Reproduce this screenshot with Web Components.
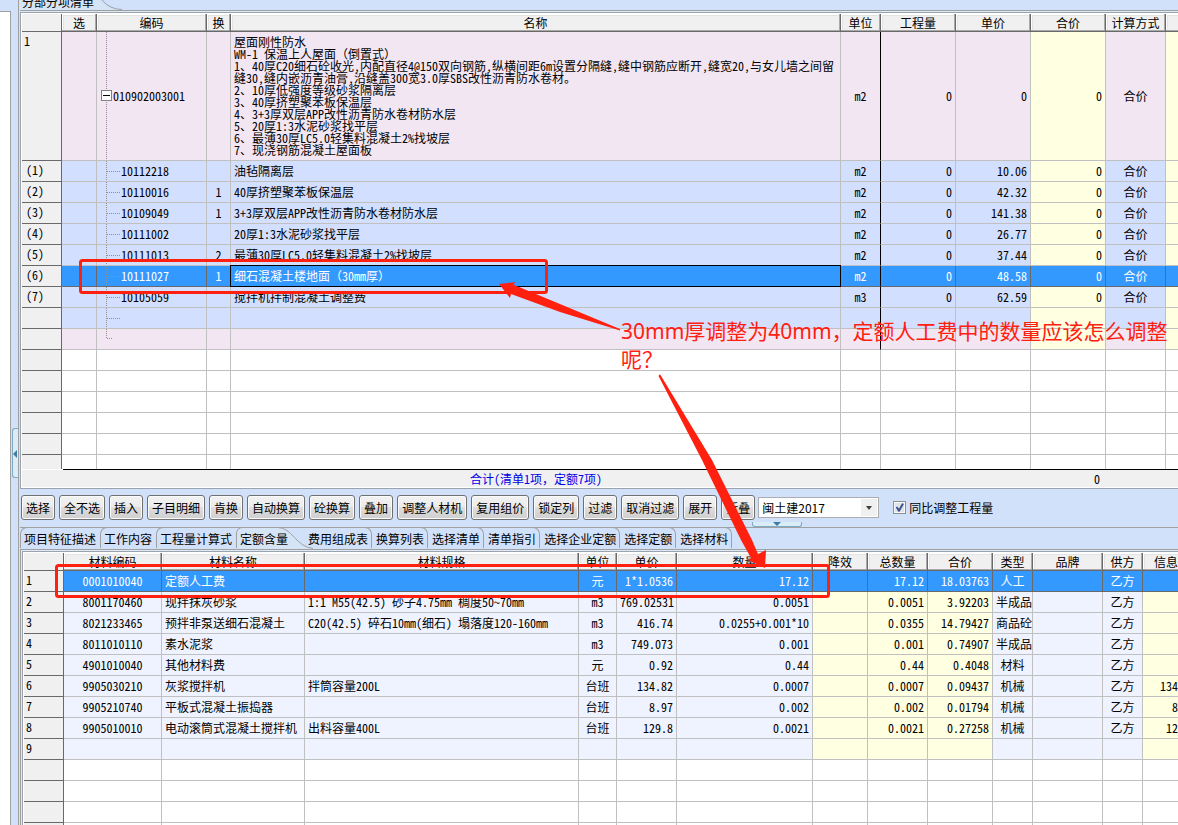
<!DOCTYPE html>
<html lang="zh-CN">
<head>
<meta charset="utf-8">
<title>分部分项清单</title>
<style>
  html, body { margin: 0; height: 100%; }
  body { overflow: hidden; font: 12px/16px "Noto Sans CJK SC", "Liberation Sans", sans-serif; color: #000; }
</style>
</head>
<body>
<budget-app></budget-app>

<script>
const GRID_FONT = '"Noto Sans Mono CJK SC", "Liberation Mono", "Noto Sans CJK SC", monospace';

function define(name, html, setup) {
  const tpl = document.createElement('template');
  tpl.innerHTML = html;
  customElements.define(name, class extends HTMLElement {
    constructor() {
      super();
      this.attachShadow({ mode: 'open' }).append(tpl.content.cloneNode(true));
    }
    connectedCallback() { if (setup) setup.call(this, this.shadowRoot); }
  });
}

/* ---------- data ---------- */
const SHEETS = {
  bill: {
    cols: [['', 40, 'h'], ['选', 35, 'c'], ['编码', 110, 'tree'], ['换', 24, 'c'], ['名称', 0, 'l'], ['单位', 40, 'c freeze'],
           ['工程量', 75, 'r'], ['单价', 75, 'r'], ['合价', 75, 'r y'], ['计算方式', 60, 'c'], ['', 12, 'y']],
    rows: [
      ['root', '1', '', '010902003001', '', '屋面刚性防水\nWM-1 保温上人屋面（倒置式）\n1、40厚C20细石砼收光,内配直径4@150双向钢筋,纵横间距6m设置分隔缝,缝中钢筋应断开,缝宽20,与女儿墙之间留\n缝30,缝内嵌沥青油膏,沿缝盖300宽3.0厚SBS改性沥青防水卷材。\n2、10厚低强度等级砂浆隔离层\n3、40厚挤塑聚苯板保温层\n4、3+3厚双层APP改性沥青防水卷材防水层\n5、20厚1:3水泥砂浆找平层\n6、最薄30厚LC5.0轻集料混凝土2%找坡层\n7、现浇钢筋混凝土屋面板', 'm2', '0', '0', '0', '合价', ''],
      ['child', '(1)', '', '10112218', '', '油毡隔离层', 'm2', '0', '10.06', '0', '合价', ''],
      ['child', '(2)', '', '10110016', '1', '40厚挤塑聚苯板保温层', 'm2', '0', '42.32', '0', '合价', ''],
      ['child', '(3)', '', '10109049', '1', '3+3厚双层APP改性沥青防水卷材防水层', 'm2', '0', '141.38', '0', '合价', ''],
      ['child', '(4)', '', '10111002', '', '20厚1:3水泥砂浆找平层', 'm2', '0', '26.77', '0', '合价', ''],
      ['child', '(5)', '', '10111013', '2', '最薄30厚LC5.0轻集料混凝土2%找坡层', 'm2', '0', '37.44', '0', '合价', ''],
      ['child sel', '(6)', '', '10111027', '1', '细石混凝土楼地面（30mm厚）', 'm2', '0', '48.58', '0', '合价', ''],
      ['child', '(7)', '', '10105059', '', '搅拌机拌制混凝土调整费', 'm3', '0', '62.59', '0', '合价', ''],
      ['child', '', '', '', '', '', '', '', '', '', '', ''],
      ['root end', '', '', '', '', '', '', '', '', '', '', '']
    ],
    blanks: 12
  },
  materials: {
    cols: [['', 40, 'h'], ['材料编码', 98, 'c'], ['材料名称', 143, 'l'], ['材料规格', 0, 'l'], ['单位', 38, 'c'], ['单价', 60, 'r'],
           ['数量', 136, 'r'], ['降效', 55, 'y'], ['总数量', 60, 'r y'], ['合价', 65, 'r y'], ['类型', 40, 'c'], ['品牌', 70, 'c'],
           ['供方', 40, 'c'], ['信息', 35, 'clip y']],
    rows: [
      ['item sel', '1', '0001010040', '定额人工费', '', '元', '1*1.0536', '17.12', '', '17.12', '18.03763', '人工', '', '乙方', ''],
      ['item', '2', '8001170460', '现拌抹灰砂浆', '1:1 M55(42.5) 砂子4.75mm 稠度50~70mm', 'm3', '769.02531', '0.0051', '', '0.0051', '3.92203', '半成品', '', '乙方', ''],
      ['item', '3', '8021233465', '预拌非泵送细石混凝土', 'C20(42.5) 碎石10mm(细石) 塌落度120-160mm', 'm3', '416.74', '0.0255+0.001*10', '', '0.0355', '14.79427', '商品砼', '', '乙方', ''],
      ['item', '4', '8011010110', '素水泥浆', '', 'm3', '749.073', '0.001', '', '0.001', '0.74907', '半成品', '', '乙方', ''],
      ['item', '5', '4901010040', '其他材料费', '', '元', '0.92', '0.44', '', '0.44', '0.4048', '材料', '', '乙方', ''],
      ['item', '6', '9905030210', '灰浆搅拌机', '拌筒容量200L', '台班', '134.82', '0.0007', '', '0.0007', '0.09437', '机械', '', '乙方', '134'],
      ['item', '7', '9905210740', '平板式混凝土振捣器', '', '台班', '8.97', '0.002', '', '0.002', '0.01794', '机械', '', '乙方', '8'],
      ['item', '8', '9905010010', '电动滚筒式混凝土搅拌机', '出料容量400L', '台班', '129.8', '0.0021', '', '0.0021', '0.27258', '机械', '', '乙方', '12'],
      ['item', '9', '', '', '', '', '', '', '', '', '', '', '', '', '']
    ],
    blanks: 12
  }
};

/* ---------- spreadsheet grid ---------- */
define('data-grid', `
<style>
  :host { display: block; overflow: hidden; background: #fff; font-family: ${GRID_FONT}; font-size: 12px; line-height: 12px; }
  table { width: 100%; table-layout: fixed; border-collapse: separate; border-spacing: 0; }
  th, td { box-sizing: border-box; height: 21px; padding: 0 3px; overflow: hidden; white-space: pre; font-weight: normal;
           border: 0 solid #c0c0c0; border-width: 0 1px 1px 0; position: relative; vertical-align: middle; text-align: left; }
  thead th { height: 18px; text-align: center; background: #f0f0f0; border-color: #696969;
             box-shadow: inset -1px -1px #a9a9a9, inset 1px 1px #fff, inset 2px 2px #e3e3e3; padding: 0; }
  thead th.clip { text-align: right; }
  th.h { background: #f0f0f0; border-color: #696969; box-shadow: none; }
  tr > :last-child { border-right-width: 0; }
  thead th:last-child { box-shadow: inset 0 -1px #a9a9a9, inset 1px 1px #fff, inset 2px 2px #e3e3e3; }
  tbody th.h { vertical-align: top; line-height: 18px; padding: 0 2px; }
  .child th.h { padding-left: 4px; }
  td.c { text-align: center; }
  td.r { text-align: right; }
  td.clip { text-align: right; padding: 0; }
  .root td { height: 21px; background: #f3e6f3; }
  .child td { background: #d3dfff; }
  .item td { background: #eff3ff; }
  .root td.y, .child td.y, .item td.y { background: #ffffe1; }
  tr.sel td, tr.sel td.y { background: #39f; color: #fff; border-color: #696969; }
  tr.root .freeze, tr.child .freeze { border-right-color: #000; }
  .root.first > * { height: 129px; }
  .child.sel td.l { overflow: visible; }
  .child.sel td.l::after { content: ""; position: absolute; inset: -1px -1px -1px -1px; border: 1px solid #000; }
  /* tree connector */
  .child .tree { padding-left: 24px; }
  .root .tree { padding-left: 16px; }
  .root .tree::before, .child .tree::before { content: ""; position: absolute; left: 9px; top: 0; bottom: 0; width: 1px;
     background: repeating-linear-gradient(#909090 0 1px, transparent 1px 2px); }
  .child .tree::after { content: ""; position: absolute; left: 10px; top: 10px; height: 1px; width: 13px;
     background: repeating-linear-gradient(90deg, #909090 0 1px, transparent 1px 2px); }
  .end .tree::before { bottom: 10px; }
  .end .tree::after { content: ""; position: absolute; left: 10px; top: 9px; height: 1px; width: 6px;
     background: repeating-linear-gradient(90deg, #909090 0 1px, transparent 1px 2px); }
  .box { position: absolute; left: 4px; top: 50%; width: 9px; height: 9px; margin-top: -6px; border: 1px solid #808080; background: #fff; }
  .box::after { content: ""; position: absolute; left: 1px; right: 1px; top: 4px; height: 1px; background: #000; }
</style>
<table><colgroup></colgroup><thead></thead><tbody></tbody></table>`, function (root) {
  const sheet = SHEETS[this.getAttribute('sheet')];
  const el = (tag, cls, text) => {
    const e = document.createElement(tag);
    if (cls) e.className = cls;
    if (text) e.textContent = text;
    return e;
  };
  const head = el('tr');
  for (const [title, width, cls] of sheet.cols) {
    const col = el('col');
    if (width) col.style.width = width + 'px';
    root.querySelector('colgroup').append(col);
    head.append(el('th', cls, title));
  }
  root.querySelector('thead').append(head);
  const body = root.querySelector('tbody');
  const addRow = (cls, cells) => {
    const tr = el('tr', cls);
    sheet.cols.forEach(([, , c], i) => tr.append(el(i ? 'td' : 'th', c, cells[i])));
    body.append(tr);
    return tr;
  };
  sheet.rows.forEach(([cls, ...cells], i) => {
    const first = i === 0 && cls === 'root';
    const tr = addRow(first ? cls + ' first' : cls, cells);
    if (first) tr.querySelector('.tree').append(el('span', 'box'));
  });
  for (let i = 0; i < sheet.blanks; i++) addRow('', []);
});

/* ---------- controls ---------- */
define('tool-button', `
<style>
  :host { display: block; }
  button { display: block; box-sizing: border-box; height: 25px; padding: 0 4px; font: inherit; color: #000; white-space: nowrap;
    border: 1px solid #707070; border-radius: 3px; box-shadow: inset 0 0 0 1px #fbfbfb;
    background: linear-gradient(#f2f2f2, #ebebeb 50%, #dddddd 50%, #cfcfcf); }
</style><button type="button"><slot></slot></button>`);

define('quota-select', `
<style>
  :host { display: block; position: relative; width: 121px; height: 21px; }
  select { box-sizing: border-box; width: 100%; height: 21px; margin: 0; padding: 0 20px 0 3px; font: inherit; color: #000;
    appearance: none; background: #fff; border: 1px solid #abadb3; border-radius: 0; }
  span { position: absolute; top: 2px; right: 2px; width: 16px; height: 17px; background: #f0f0f0; pointer-events: none; }
  span::after { content: ""; position: absolute; left: 5px; top: 7px; border: solid transparent; border-width: 4px 3px 0; border-top-color: #404040; }
</style>
<select aria-label="定额库"><option>闽土建2017</option></select><span></span>`);

define('check-option', `
<style>
  :host { display: block; }
  label { display: flex; align-items: center; gap: 3px; white-space: nowrap; }
  input { appearance: none; box-sizing: border-box; width: 13px; height: 13px; margin: 0; position: relative;
    border: 1px solid #8e8f8f; background: #dfe4ea; box-shadow: inset 0 0 0 1px #f8f8f8; }
  input:checked::after { content: ""; position: absolute; inset: 1px; background: #3b4f8f;
    clip-path: polygon(6% 50%, 22% 40%, 42% 64%, 76% 4%, 96% 10%, 48% 98%, 36% 98%); }
</style>
<label><input type="checkbox" checked><slot></slot></label>`);

define('sheet-tab', `
<style>
  :host { display: block; }
  button { display: block; box-sizing: border-box; height: 21px; padding: 2px 4px 0 3px; font: inherit; color: #000; background: #d2e1fa;
    border: 1px solid #a0a0a0; border-width: 1px 0 0 1px; border-radius: 7px 0 0 0; white-space: nowrap; }
  :host([after]) button { border-width: 1px 1px 0 0; border-radius: 0 7px 0 0; padding: 2px 3px 0 4px; }
  :host([active]) { margin-right: 12px; position: relative; height: 22px; }
  :host([active]) button { background: none; border: 0; padding: 3px 4px 0; position: relative; }
  svg { display: none; }
  :host([active]) svg { display: block; position: absolute; left: 0; top: 0; overflow: visible; }
</style>
<svg width="80" height="22" aria-hidden="true">
  <path d="M0 22V7Q0 .5 7 .5H42C56 .5 60 20 77 21.500H77V22Z" fill="#d6e5f5"/>
  <path d="M.5 21V7Q.5 .5 7 .5H42C56 .5 60 20 77 21.500" fill="none" stroke="#a0a0a0"/>
</svg>
<button type="button"><slot></slot></button>`);

/* ---------- bill pane ---------- */
define('bill-pane', `
<style>
  :host { display: block; flex: none; }
  .strip { height: 10px; position: relative; overflow: hidden; display: flex; align-items: flex-end; padding-left: 2px; }
  .strip b { font-weight: normal; line-height: 16px; position: relative; }
  .strip svg { position: absolute; left: 0; bottom: 0; }
  .page { border-top: 1px solid #a0a0a0; padding-top: 1px; background: #dfe8f5; }
  .frame { border: 1px solid #9aa3b0; border-width: 1px 0 1px 1px; padding: 1px 0 1px 1px; background: #fff; }
  data-grid { height: 455px; }
  .rule { height: 1px; margin-left: 41px; background: #000; }
  footer { display: grid; grid-template-columns: 209px 1fr 265px 72px; height: 17px; line-height: 17px; background: #f0f0f0;
    font-family: ${GRID_FONT}; }
  footer span { text-align: center; color: #0000e6; grid-column: 2; }
  footer output { text-align: right; padding-right: 6px; }
</style>
<div class="strip"><svg width="120" height="10" aria-hidden="true"><path d="M0 0H78Q88 10 100 10H0Z" fill="#d6e5f5"/><path d="M82 0Q90 9.500 102 9.500" fill="none" stroke="#a0a0a0"/></svg><b>分部分项清单</b></div>
<div class="page"><div class="frame">
  <data-grid sheet="bill"></data-grid>
  <div class="rule"></div>
  <footer><span>合计(清单1项，定额7项)</span><output>0</output></footer>
</div></div>`);

/* ---------- toolbar ---------- */
define('grid-toolbar', `
<style>
  :host { display: flex; gap: 4px; flex: none; align-items: center; position: relative; padding: 6px 0 7px 1px; }
  quota-select { margin: 0 10px 0 -1px; }
  .grip { position: absolute; left: 732px; bottom: 0; width: 48px; height: 4px; border: 1px solid #7fa9c4; border-top: 0; border-radius: 0 0 3px 3px; background: #d9ecf8; }
  .grip::after { content: ""; position: absolute; left: 20px; top: 0; border: solid transparent; border-width: 4px 4px 0; border-top-color: #3c7da3; }
</style>
<tool-button>选择</tool-button><tool-button>全不选</tool-button><tool-button>插入</tool-button><tool-button>子目明细</tool-button><tool-button>肯换</tool-button><tool-button>自动换算</tool-button><tool-button>砼换算</tool-button><tool-button>叠加</tool-button><tool-button>调整人材机</tool-button><tool-button>复用组价</tool-button><tool-button>锁定列</tool-button><tool-button>过滤</tool-button><tool-button>取消过滤</tool-button><tool-button>展开</tool-button><tool-button>折叠</tool-button>
<quota-select></quota-select>
<check-option>同比调整工程量</check-option>
<div class="grip"></div>`);

/* ---------- material pane ---------- */
define('material-pane', `
<style>
  :host { display: flex; flex-direction: column; flex: 1; min-height: 0; }
  nav { display: flex; flex: none; height: 21px; border-top: 1px solid #a0a0a0; }
  nav > * { margin-top: -1px; }
  .page { flex: 1; min-height: 0; display: flex; border: 1px solid #a0a0a0; border-width: 1px 0 0 1px; padding: 1px 0 0 1px; background: #dfe8f5; }
  .frame { flex: 1; min-width: 0; border: 1px solid #9aa3b0; border-width: 1px 0 0 1px; padding: 1px 0 0 1px; background: #fff; display: flex; }
  data-grid { flex: 1; min-width: 0; }
</style>
<nav>
  <sheet-tab>项目特征描述</sheet-tab><sheet-tab>工作内容</sheet-tab><sheet-tab>工程量计算式</sheet-tab><sheet-tab active>定额含量</sheet-tab><sheet-tab after>费用组成表</sheet-tab><sheet-tab after>换算列表</sheet-tab><sheet-tab after>选择清单</sheet-tab><sheet-tab after>清单指引</sheet-tab><sheet-tab after>选择企业定额</sheet-tab><sheet-tab after>选择定额</sheet-tab><sheet-tab after>选择材料</sheet-tab>
</nav>
<div class="page"><div class="frame"><data-grid sheet="materials"></data-grid></div></div>`);

/* ---------- red markup drawn over the sheets ---------- */
define('markup-layer', `
<style>
  :host { position: absolute; inset: 0; pointer-events: none; overflow: hidden; color: #ff2010; }
  svg { position: absolute; left: 0; top: 0; overflow: visible; }
  p { position: absolute; left: 621px; top: 317px; margin: 0; width: 556px; font: 21px/28px "Noto Sans", "Noto Sans CJK SC", sans-serif; }
</style>
<svg width="1178" height="825" aria-hidden="true">
  <g fill="none" stroke="#ff2010" stroke-width="3">
    <rect x="80.500" y="260.500" width="466" height="32" rx="2"/>
    <rect x="56.500" y="565.500" width="772" height="31" rx="2"/>
  </g>
  <g fill="#ff2010">
    <path d="M499 284L516 282L513 284.500L620 329L620 330.500L560 312L511 294L510 298Z"/>
    <path d="M659.500 374.500L658.500 376L702 460L741 540L751 558L748 560L765 568L766 550L758 554L752 540L712 460L660.500 375Z"/>
  </g>
</svg>
<p><slot></slot></p>`);

/* ---------- window ---------- */
define('budget-app', `
<style>
  :host { display: flex; height: 100vh; position: relative; overflow: hidden; background: #d2e1fa; }
  aside { flex: none; width: 10px; margin-top: 11px; background: #fff; border: 1px solid #a0a0a0; border-width: 1px 1px 0 0; }
  .gutter { flex: none; width: 7px; position: relative; }
  .grip { position: absolute; left: 1px; top: 428px; width: 5px; height: 48px; border: 1px solid #7fa9c4; border-right: 0; border-radius: 3px 0 0 3px; background: #d9ecf8; }
  .grip::after { content: ""; position: absolute; left: 0; top: 21px; border: solid transparent; border-width: 4px 4px 4px 0; border-right-color: #3c7da3; }
  main { flex: 1; min-width: 0; display: flex; flex-direction: column; border-left: 1px solid #a0a0a0; padding-left: 1px; }
</style>
<aside></aside>
<div class="gutter"><div class="grip"></div></div>
<main>
  <bill-pane></bill-pane>
  <grid-toolbar></grid-toolbar>
  <material-pane></material-pane>
</main>
<markup-layer>30mm厚调整为40mm，定额人工费中的数量应该怎么调整呢？</markup-layer>`);
</script>
</body>
</html>
